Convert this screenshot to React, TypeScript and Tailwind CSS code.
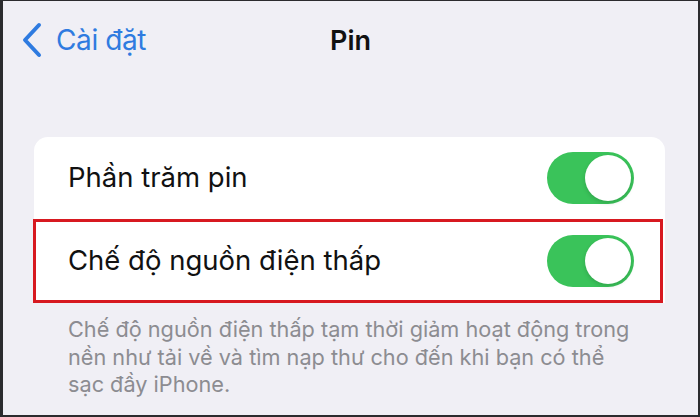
import { useState } from 'react'

type ToggleProps = {
  on: boolean
  onChange: () => void
}

function Toggle({ on, onChange }: ToggleProps) {
  return (
    <button
      onClick={onChange}
      className={`relative w-[87px] h-[52px] rounded-full shrink-0 transition-colors ${
        on ? 'bg-[#3ac35a]' : 'bg-[#e4e4e9]'
      }`}
    >
      <span
        className={`absolute top-[3px] w-[46px] h-[46px] rounded-full bg-white shadow-[0_2px_4px_rgba(0,0,0,0.15)] transition-all ${
          on ? 'left-[38px]' : 'left-[3px]'
        }`}
      />
    </button>
  )
}

export default function App() {
  const [percent, setPercent] = useState(true)
  const [lowPower, setLowPower] = useState(true)

  return (
    <div
      className="w-[700px] h-[417px] bg-[#2b2b2e] pl-[3px] pr-[2px] pt-px pb-[2px] overflow-hidden"
      style={{ fontFamily: 'Inter, "Noto Sans", sans-serif' }}
    >
      <div className="h-full bg-[#f0eff5] flex flex-col">
        {/* Nav bar */}
        <div className="relative h-[80px] flex items-center">
          <button className="flex items-center text-[#2f7be0] ml-[17px] mt-[-2px]">
            <svg width="24" height="36" viewBox="0 0 24 36" fill="none">
              <path
                d="M19 3 L5 18 L19 33"
                stroke="currentColor"
                strokeWidth="4"
                strokeLinecap="round"
                strokeLinejoin="round"
              />
            </svg>
            <span className="ml-[12px] text-[28px] leading-none tracking-[-0.4px]">Cài đặt</span>
          </button>
          <div className="absolute left-0 right-0 text-center text-[27px] font-semibold text-[#111] leading-none mt-[-2px] pointer-events-none">
            Pin
          </div>
        </div>

        {/* Settings group */}
        <div className="mt-[56px] ml-[31px] mr-[33px] bg-white rounded-t-[14px]">
          <div className="h-[82px] flex items-center justify-between pl-[34px] pr-[31px]">
            <span className="text-[27.5px] text-[#111]">Phần trăm pin</span>
            <Toggle on={percent} onChange={() => setPercent(!percent)} />
          </div>
          <div className="h-[84px] -ml-px mr-[2px] border-[3px] border-[#d71920] flex items-center justify-between pl-[32px] pr-[26px]">
            <span className="text-[27.5px] text-[#111]">Chế độ nguồn điện thấp</span>
            <Toggle on={lowPower} onChange={() => setLowPower(!lowPower)} />
          </div>
        </div>

        <p className="mt-[13px] ml-[65px] text-[21.7px] leading-[27.5px] text-[#8c8c91]">
          Chế độ nguồn điện thấp tạm thời giảm hoạt động trong
          <br />
          nền như tải về và tìm nạp thư cho đến khi bạn có thể
          <br />
          sạc đầy iPhone.
        </p>
      </div>
    </div>
  )
}
